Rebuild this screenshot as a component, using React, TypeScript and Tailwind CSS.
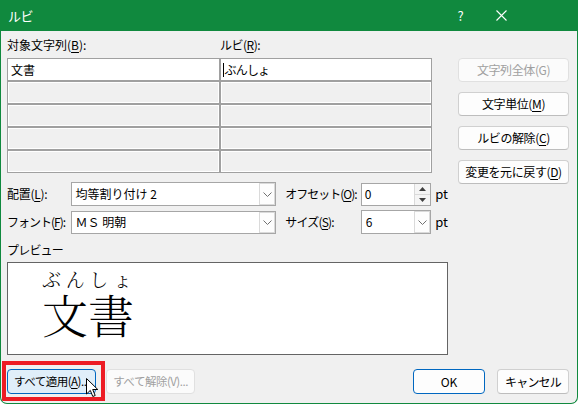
import React from 'react';

const font = "font-['Noto_Sans_CJK_JP','Noto_Sans',sans-serif]";

function U({ children }: { children: React.ReactNode }) {
  return <span className="underline underline-offset-[2px] decoration-[1px]">{children}</span>;
}

function Chevron() {
  return (
    <svg width="9" height="5" viewBox="0 0 9 5" className="block">
      <path d="M0.5 0.5 L4.5 4.5 L8.5 0.5" fill="none" stroke="#707070" strokeWidth="1" />
    </svg>
  );
}

function Select({ text, className }: { text: string; className: string }) {
  return (
    <div className={`flex border border-[#a6a6a6] bg-white ${className}`}>
      <div className="flex-1 flex items-center pl-[4px] text-[12px] text-black">{text}</div>
      <div className="w-[16px] flex items-center justify-center border border-[#dadada] bg-[#fdfdfd]">
        <Chevron />
      </div>
    </div>
  );
}

function Spin() {
  return (
    <div className="flex w-[71px] h-[23px] border border-[#a6a6a6] bg-white">
      <div className="flex-1 flex items-center pl-[3px] text-[12px]">0</div>
      <div className="w-[16px] flex flex-col border-l border-[#dadada]">
        <div className="flex-1 flex items-center justify-center border-b border-[#dadada] bg-[#f5f5f5]">
          <svg width="7" height="4" viewBox="0 0 7 4"><path d="M0 4 L3.5 0 L7 4 Z" fill="#404040" /></svg>
        </div>
        <div className="flex-1 flex items-center justify-center bg-[#f5f5f5]">
          <svg width="7" height="4" viewBox="0 0 7 4"><path d="M0 0 L3.5 4 L7 0 Z" fill="#404040" /></svg>
        </div>
      </div>
    </div>
  );
}

function SideBtn({ children, disabled }: { children: React.ReactNode; disabled?: boolean }) {
  return (
    <div
      className={`w-[111px] h-[24px] flex items-center justify-center rounded-[4px] border text-[12px] tracking-[-0.4px] ${
        disabled ? 'border-[#e0e0e0] bg-[#fbfbfb] text-[#a0a0a0]' : 'border-[#d0d0d0] border-b-[#bdbdbd] bg-[#fdfdfd] text-black'
      }`}
    >
      {children}
    </div>
  );
}

export default function App() {
  const rows = [0, 1, 2, 3];
  return (
    <div className={`${font} relative w-[578px] h-[404px] overflow-hidden whitespace-nowrap bg-[#f0f0f0] border-x border-b border-[#10893e] rounded-b-[7px] flex flex-col text-[12px] text-black`}>
      {/* title bar */}
      <div className="h-[31px] shrink-0 bg-[#10893e] flex items-center text-white">
        <span className="pl-[7px] text-[13px] tracking-[-0.5px]">ルビ</span>
        <span className="ml-auto w-[41px] text-center text-[13px]">?</span>
        <span className="w-[41px] flex justify-center mr-[55px]">
          <svg width="11" height="11" viewBox="0 0 11 11">
            <path d="M0.5 0.5 L10.5 10.5 M10.5 0.5 L0.5 10.5" stroke="white" strokeWidth="1.1" />
          </svg>
        </span>
      </div>

      <div className="flex pl-[6px]">
        {/* left column */}
        <div className="w-[441px] flex flex-col">
          <div className="h-[27px] flex items-center">
            <span className="w-[213px]">対象文字列(<U>B</U>):</span>
            <span className="tracking-[-0.5px]">ルビ(<U>R</U>):</span>
          </div>
          <div className="grid grid-cols-2 gap-[2px] w-[425px] border border-[#a0a0a0] bg-[#a0a0a0]">
            <div className="h-[21px] bg-white flex items-center pl-[3px]">文書</div>
            <div className="h-[21px] bg-white flex items-center pl-[2px] tracking-[-0.8px]">
              <span className="w-[1px] h-[14px] bg-black mr-[1px]" />
              ぶんしょ
            </div>
            {rows.map((r) => (
              <React.Fragment key={r}>
                <div className="h-[21px] bg-[#f0f0f0] border border-white" />
                <div className="h-[21px] bg-[#f0f0f0] border border-white" />
              </React.Fragment>
            ))}
          </div>

          <div className="mt-[9px] h-[24px] flex items-center">
            <span className="w-[64px] tracking-[-0.3px]">配置(<U>L</U>):</span>
            <Select text="均等割り付け 2" className="w-[207px] h-[24px]" />
            <span className="ml-[9px] w-[76px] tracking-[-1px]">オフセット(<U>O</U>):</span>
            <Spin />
            <span className="ml-[4px] text-[13px]">pt</span>
          </div>
          <div className="mt-[4px] h-[24px] flex items-center">
            <span className="w-[64px] tracking-[-1px]">フォント(<U>F</U>):</span>
            <Select text="ＭＳ 明朝" className="w-[207px] h-[23px]" />
            <span className="ml-[9px] w-[76px] tracking-[-0.8px]">サイズ(<U>S</U>):</span>
            <Select text="6" className="w-[71px] h-[24px]" />
            <span className="ml-[4px] text-[13px]">pt</span>
          </div>

          <div className="h-[28px] flex items-center pt-[4px] tracking-[-0.8px]">プレビュー</div>
          <div className="h-[93px] w-[441px] border border-[#646464] bg-white pl-[34px] pt-[5px]">
            <div className="w-[90px] flex justify-between text-[19px] leading-[22px] font-light font-['Noto_Serif_CJK_JP','Noto_Sans_CJK_JP',serif]">
              <span>ぶ</span><span>ん</span><span>し</span><span>ょ</span>
            </div>
            <div className="text-[46px] leading-[46px] font-light font-['Noto_Serif_CJK_JP','Noto_Sans_CJK_JP',serif]">文書</div>
          </div>
        </div>

        {/* right column */}
        <div className="ml-[10px] pt-[27px] flex flex-col gap-[10px]">
          <SideBtn disabled>文字列全体(G)</SideBtn>
          <SideBtn>文字単位(<U>M</U>)</SideBtn>
          <SideBtn>ルビの解除(<U>C</U>)</SideBtn>
          <SideBtn>変更を元に戻す(<U>D</U>)</SideBtn>
        </div>
      </div>

      {/* bottom buttons */}
      <div className="mt-[14px] pl-[6px] pr-[8px] flex items-center">
        <div className="w-[89px] h-[25px] flex items-center justify-center rounded-[4px] border border-[#0067c0] bg-[#e0eef9] text-[11.5px] tracking-[-0.5px]">
          すべて適用(<U>A</U>)...
        </div>
        <div className="ml-[10px] w-[89px] h-[25px] flex items-center justify-center rounded-[4px] border border-[#e0e0e0] bg-[#fbfbfb] text-[#a0a0a0] text-[11.5px] tracking-[-0.5px]">
          すべて解除(V)...
        </div>
        <div className="ml-auto w-[72px] h-[25px] flex items-center justify-center rounded-[4px] border border-[#0067c0] bg-[#fdfdfd]">
          OK
        </div>
        <div className="ml-[12px] w-[72px] h-[25px] flex items-center justify-center rounded-[4px] border border-[#d0d0d0] border-b-[#bdbdbd] bg-[#fdfdfd] tracking-[-0.8px]">
          キャンセル
        </div>
      </div>

      {/* annotation highlight */}
      <div className="absolute left-[1px] top-[361px] w-[103px] h-[40px] border-[4px] border-[#ed1c24]" />
      {/* mouse pointer */}
      <svg className="absolute left-[85px] top-[378px]" width="13" height="20" viewBox="0 0 13 20">
        <path d="M0.5 0.5 L0.5 16 L4.3 12.4 L6.8 18.5 L9.2 17.5 L6.7 11.5 L11.8 11.5 Z" fill="white" stroke="black" strokeWidth="1" strokeLinejoin="round" />
      </svg>
    </div>
  );
}
